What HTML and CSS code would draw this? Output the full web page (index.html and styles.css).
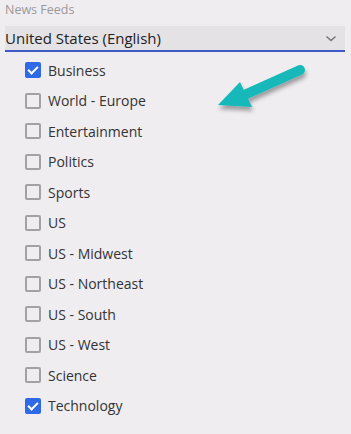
FILE: index.html
```html
<!DOCTYPE html>
<html lang="en">
<head>
    <meta charset="UTF-8">
    <title>News Feeds</title>
    <link rel="stylesheet" href="styles.css">
</head>
<body>
    <div class="panel">
        <div class="field-label">News Feeds</div>
        <div class="select">
            <span class="select-value">United States (English)</span>
            <svg class="chevron" width="12" height="8" viewBox="0 0 12 8"><path d="M1.5 1.5 L6 5.5 L10.5 1.5" fill="none" stroke="#77757a" stroke-width="1.5"/></svg>
        </div>

        <ul class="feed-list">
            <li class="feed checked"><span class="box"></span>Business</li>
            <li class="feed"><span class="box"></span>World - Europe</li>
            <li class="feed"><span class="box"></span>Entertainment</li>
            <li class="feed"><span class="box"></span>Politics</li>
            <li class="feed"><span class="box"></span>Sports</li>
            <li class="feed"><span class="box"></span>US</li>
            <li class="feed"><span class="box"></span>US - Midwest</li>
            <li class="feed"><span class="box"></span>US - Northeast</li>
            <li class="feed"><span class="box"></span>US - South</li>
            <li class="feed"><span class="box"></span>US - West</li>
            <li class="feed"><span class="box"></span>Science</li>
            <li class="feed checked"><span class="box"></span>Technology</li>
        </ul>
    </div>

    <!-- callout arrow -->
    <svg class="arrow" width="110" height="60" viewBox="0 0 110 60">
        <defs>
            <filter id="shadow" x="-20%" y="-20%" width="150%" height="160%">
                <feDropShadow dx="1" dy="4" stdDeviation="2" flood-color="#000" flood-opacity="0.35"/>
            </filter>
        </defs>
        <g filter="url(#shadow)">
            <line x1="90" y1="10" x2="32" y2="36" stroke="#14b8ba" stroke-width="10" stroke-linecap="round"/>
            <polygon points="8,45 30,22 42,47" fill="#14b8ba"/>
        </g>
    </svg>
</body>
</html>
```

FILE: styles.css
```css
body {
    margin: 0;
    background-color: #efedf0;
    font-family: 'Open Sans', 'Noto Sans', sans-serif;
    color: #333;
}
.panel {
    padding: 1px 6px 0 5px;
}
.field-label {
    font-size: 12.5px;
    line-height: 18px;
    color: #9a989b;
}
.select {
    display: flex;
    align-items: center;
    justify-content: space-between;
    height: 24px;
    margin-top: 7px;
    padding: 0 8px 0 0;
    background-color: #e4e2e5;
    border-bottom: 2px solid #3f5bc8;
}
.select-value {
    font-size: 15px;
    color: #222;
}
.chevron {
    margin-top: 1px;
}
.feed-list {
    list-style: none;
    margin: 3px 0 0;
    padding: 0 0 0 20px;
}
.feed {
    display: flex;
    align-items: center;
    height: 30.5px;
    font-size: 14px;
    color: #333;
}
.box {
    width: 12px;
    height: 12px;
    border: 2px solid #a3a1a4;
    border-radius: 2px;
    margin-right: 7px;
    box-sizing: content-box;
    position: relative;
}
.feed.checked .box {
    background-color: #2e6ae6;
    border-color: #2e6ae6;
}
.feed.checked .box::after {
    content: "";
    position: absolute;
    left: 3px;
    top: 0px;
    width: 4px;
    height: 8px;
    border: solid #fff;
    border-width: 0 2px 2px 0;
    transform: rotate(45deg);
}
.arrow {
    position: absolute;
    left: 210px;
    top: 60px;
}
```
